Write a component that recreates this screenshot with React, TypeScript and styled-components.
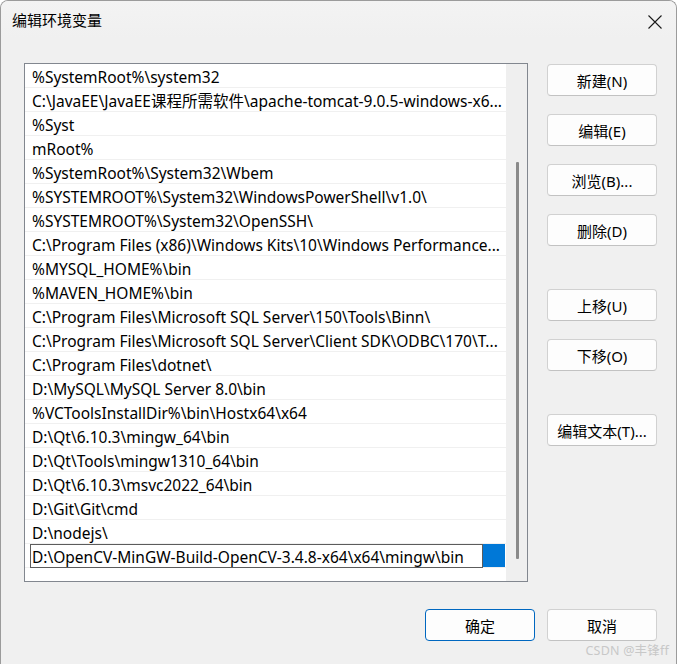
import React from "react";
import styled, { createGlobalStyle } from "styled-components";

const GlobalStyle = createGlobalStyle`
  html, body {
    margin: 0;
    padding: 0;
    background: #ffffff;
  }
  body {
    font-family: "Noto Sans", "Noto Sans CJK SC", sans-serif;
  }
`;

const PATHS = [
  "%SystemRoot%\\system32",
  "C:\\JavaEE\\JavaEE课程所需软件\\apache-tomcat-9.0.5-windows-x6...",
  "%Syst",
  "mRoot%",
  "%SystemRoot%\\System32\\Wbem",
  "%SYSTEMROOT%\\System32\\WindowsPowerShell\\v1.0\\",
  "%SYSTEMROOT%\\System32\\OpenSSH\\",
  "C:\\Program Files (x86)\\Windows Kits\\10\\Windows Performance...",
  "%MYSQL_HOME%\\bin",
  "%MAVEN_HOME%\\bin",
  "C:\\Program Files\\Microsoft SQL Server\\150\\Tools\\Binn\\",
  "C:\\Program Files\\Microsoft SQL Server\\Client SDK\\ODBC\\170\\T...",
  "C:\\Program Files\\dotnet\\",
  "D:\\MySQL\\MySQL Server 8.0\\bin",
  "%VCToolsInstallDir%\\bin\\Hostx64\\x64",
  "D:\\Qt\\6.10.3\\mingw_64\\bin",
  "D:\\Qt\\Tools\\mingw1310_64\\bin",
  "D:\\Qt\\6.10.3\\msvc2022_64\\bin",
  "D:\\Git\\Git\\cmd",
  "D:\\nodejs\\",
];

const EDITING = "D:\\OpenCV-MinGW-Build-OpenCV-3.4.8-x64\\x64\\mingw\\bin";

const SIDE_BUTTONS: { label: string; gap: number }[] = [
  { label: "新建(N)", gap: 0 },
  { label: "编辑(E)", gap: 18 },
  { label: "浏览(B)...", gap: 18 },
  { label: "删除(D)", gap: 18 },
  { label: "上移(U)", gap: 43 },
  { label: "下移(O)", gap: 18 },
  { label: "编辑文本(T)...", gap: 43 },
];

function CloseIcon() {
  return (
    <svg width="14" height="14" viewBox="0 0 14 14">
      <path d="M0.5 0.5 L13.5 13.5 M13.5 0.5 L0.5 13.5" stroke="#1a1a1a" strokeWidth="1.1" fill="none" />
    </svg>
  );
}

export default function App() {
  return (
    <>
      <GlobalStyle />
      <Dialog>
        <TitleBar>
          <Title>编辑环境变量</Title>
          <CloseButton>
            <CloseIcon />
          </CloseButton>
        </TitleBar>
        <Body>
          <Main>
            <PathList>
              <Rows>
                {PATHS.map((p) => (
                  <Row key={p}>{p}</Row>
                ))}
                <EditRow>
                  <EditBox>{EDITING}</EditBox>
                  <Selection />
                </EditRow>
              </Rows>
              <ScrollTrack>
                <Thumb />
              </ScrollTrack>
            </PathList>
            <SideButtons>
              {SIDE_BUTTONS.map((b) => (
                <Button key={b.label} gap={b.gap}>
                  {b.label}
                </Button>
              ))}
            </SideButtons>
          </Main>
          <Footer>
            <Button primary>确定</Button>
            <Button>取消</Button>
          </Footer>
        </Body>
        <Watermark>CSDN @丰锋ff</Watermark>
      </Dialog>
    </>
  );
}

const Dialog = styled.div`
  position: relative;
  box-sizing: border-box;
  width: 677px;
  height: 664px;
  border: 1px solid #9b9b9b;
  border-bottom: none;
  border-radius: 8px 8px 0 0;
  background: #f0f0f0;
  overflow: hidden;
  display: flex;
  flex-direction: column;
`;

const TitleBar = styled.div`
  height: 37px;
  display: flex;
  align-items: center;
  justify-content: space-between;
  padding: 0 14px 0 11px;
  background: linear-gradient(#f3f3f3, #f0f0f0);
`;

const Title = styled.div`
  font-size: 15px;
  color: #000;
  margin-top: -1px;
`;

const CloseButton = styled.div`
  width: 14px;
  height: 14px;
  margin-top: -1px;
`;

const Body = styled.div`
  padding: 25px 19px 0 23px;
  display: flex;
  flex-direction: column;
`;

const Main = styled.div`
  display: flex;
  gap: 19px;
`;

const PathList = styled.div`
  box-sizing: border-box;
  width: 504px;
  height: 519px;
  border: 1px solid #82878f;
  background: #ffffff;
  display: flex;
`;

const Rows = styled.div`
  flex: 1;
  min-width: 0;
  display: flex;
  flex-direction: column;
`;

const Row = styled.div`
  box-sizing: border-box;
  height: 24px;
  line-height: 23px;
  padding: 2px 0 0 7px;
  border-bottom: 1px solid #f0f0f0;
  font-size: 15.5px;
  color: #000;
  white-space: nowrap;
  overflow-x: clip;
  overflow-y: visible;
`;

const EditRow = styled.div`
  box-sizing: border-box;
  height: 24px;
  display: flex;
  padding-left: 5px;
  border-bottom: 1px solid #f0f0f0;
`;

const EditBox = styled.div`
  box-sizing: border-box;
  width: 453px;
  height: 24px;
  border: 1px solid #5c5c5c;
  background: #fff;
  line-height: 23px;
  padding: 1px 0 0 1px;
  font-size: 15.5px;
  color: #000;
  white-space: nowrap;
  overflow-x: clip;
  overflow-y: visible;
`;

const Selection = styled.div`
  width: 22px;
  height: 23px;
  background: #0078d7;
`;

const ScrollTrack = styled.div`
  width: 21px;
  background: #efefef;
  display: flex;
  justify-content: center;
`;

const Thumb = styled.div`
  width: 3px;
  height: 397px;
  margin-top: 98px;
  margin-left: 1px;
  border-radius: 1px;
  background: #8a8a8a;
`;

const SideButtons = styled.div`
  display: flex;
  flex-direction: column;
  padding-top: 1px;
`;

const Button = styled.div<{ gap?: number; primary?: boolean }>`
  box-sizing: border-box;
  width: 110px;
  height: 32px;
  margin-top: ${({ gap }) => gap ?? 0}px;
  border: 1px solid ${({ primary }) => (primary ? "#0067c0" : "#d1d1d1")};
  border-bottom-color: ${({ primary }) => (primary ? "#0067c0" : "#c2c2c2")};
  border-radius: 4px;
  background: #fdfdfd;
  display: flex;
  align-items: center;
  justify-content: center;
  font-size: 15px;
  color: #000;
  white-space: nowrap;
`;

const Footer = styled.div`
  display: flex;
  justify-content: flex-end;
  gap: 12px;
  margin-top: 27px;
`;

const Watermark = styled.div`
  position: absolute;
  right: 7px;
  bottom: 5px;
  font-size: 12.5px;
  color: #c8c8c8;
  letter-spacing: 0.2px;
`;
